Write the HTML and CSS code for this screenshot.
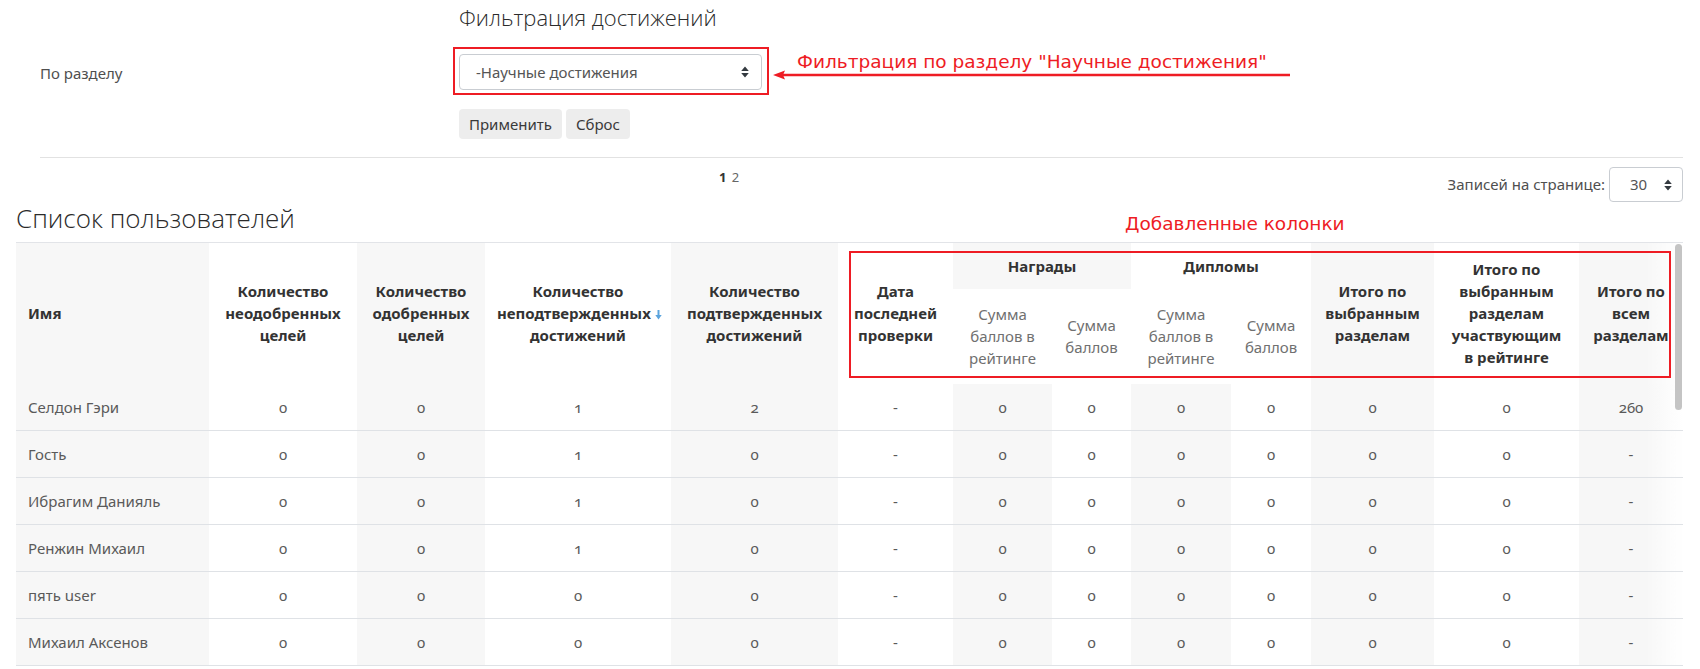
FILE: index.html
```html
<!DOCTYPE html>
<html lang="ru">
<head>
<meta charset="utf-8">
<title>Фильтрация достижений</title>
<link rel="stylesheet" href="styles.css">
</head>
<body>
<div class="page">
  <section class="filter">
    <div class="frow title-row">
      <div></div>
      <h3 class="ftitle">Фильтрация достижений</h3>
    </div>
    <div class="frow field-row">
      <label class="flabel">По разделу</label>
      <div class="fcontrol">
        <div class="annot-box">
          <div class="select wide">
            <span>-Научные достижения</span>
            <svg class="caret" width="8" height="12" viewBox="0 0 8 12"><path d="M4 0.5 L7.8 5 H0.2 Z M0.2 7 H7.8 L4 11.5 Z" fill="#343a40"/></svg>
          </div>
        </div>
        <div class="annot-note">
          <div class="annot-text">Фильтрация по разделу "Научные достижения"</div>
          <svg class="annot-arrow" width="517" height="10" viewBox="0 0 517 10"><path d="M10 5 H517" stroke="#ee1c24" stroke-width="2.4"/><path d="M0 5 L12 0.5 L10 5 L12 9.5 Z" fill="#ee1c24"/></svg>
        </div>
      </div>
    </div>
    <div class="frow btn-row">
      <div></div>
      <div class="btns">
        <button class="btn">Применить</button>
        <button class="btn">Сброс</button>
      </div>
    </div>
    <hr class="sep">
  </section>

  <div class="pagebar">
    <div class="pages"><b>1</b> <span class="plink">2</span></div>
    <div class="perpage">
      <span>Записей на странице:</span>
      <div class="select small">
        <span>30</span>
        <svg class="caret" width="8" height="12" viewBox="0 0 8 12"><path d="M4 0.5 L7.8 5 H0.2 Z M0.2 7 H7.8 L4 11.5 Z" fill="#343a40"/></svg>
      </div>
    </div>
  </div>

  <div class="list-head">
    <h2 class="ltitle">Список пользователей</h2>
    <span class="annot-text2">Добавленные колонки</span>
  </div>

  <div class="table-wrap">
    <table class="users">
      <colgroup>
        <col style="width:193px"><col style="width:148px"><col style="width:128px"><col style="width:186px"><col style="width:167px"><col style="width:115px"><col style="width:99px"><col style="width:79px"><col style="width:100px"><col style="width:80px"><col style="width:123px"><col style="width:145px"><col style="width:104px">
      </colgroup>
      <thead>
        <tr class="h1">
          <th rowspan="2" class="name">Имя</th>
          <th rowspan="2">Количество неодобренных целей</th>
          <th rowspan="2">Количество одобренных целей</th>
          <th rowspan="2">Количество <span class="nowrap">неподтвержденных<svg class="sort" width="7" height="10" viewBox="0 0 7 10"><path d="M3.5 0 V6" stroke="#5ba4dd" stroke-width="2"/><path d="M0.3 5 H6.7 L3.5 9.5 Z" fill="#5ba4dd"/></svg></span> достижений</th>
          <th rowspan="2">Количество подтвержденных достижений</th>
          <th rowspan="2">Дата последней проверки</th>
          <th colspan="2">Награды</th>
          <th colspan="2">Дипломы</th>
          <th rowspan="2">Итого по выбранным разделам</th>
          <th rowspan="2">Итого по выбранным разделам участвующим в рейтинге</th>
          <th rowspan="2" class="last">Итого по всем разделам</th>
        </tr>
        <tr class="h2">
          <th class="sub">Сумма баллов в рейтинге</th>
          <th class="sub">Сумма баллов</th>
          <th class="sub">Сумма баллов в рейтинге</th>
          <th class="sub">Сумма баллов</th>
        </tr>
      </thead>
      <tbody>
        <tr><td class="name">Селдон Гэри</td><td>0</td><td>0</td><td>1</td><td>2</td><td>-</td><td>0</td><td>0</td><td>0</td><td>0</td><td>0</td><td>0</td><td class="last">260</td></tr>
        <tr><td class="name">Гость</td><td>0</td><td>0</td><td>1</td><td>0</td><td>-</td><td>0</td><td>0</td><td>0</td><td>0</td><td>0</td><td>0</td><td class="last">-</td></tr>
        <tr><td class="name">Ибрагим Данияль</td><td>0</td><td>0</td><td>1</td><td>0</td><td>-</td><td>0</td><td>0</td><td>0</td><td>0</td><td>0</td><td>0</td><td class="last">-</td></tr>
        <tr><td class="name">Ренжин Михаил</td><td>0</td><td>0</td><td>1</td><td>0</td><td>-</td><td>0</td><td>0</td><td>0</td><td>0</td><td>0</td><td>0</td><td class="last">-</td></tr>
        <tr><td class="name">пять user</td><td>0</td><td>0</td><td>0</td><td>0</td><td>-</td><td>0</td><td>0</td><td>0</td><td>0</td><td>0</td><td>0</td><td class="last">-</td></tr>
        <tr><td class="name">Михаил Аксенов</td><td>0</td><td>0</td><td>0</td><td>0</td><td>-</td><td>0</td><td>0</td><td>0</td><td>0</td><td>0</td><td>0</td><td class="last">-</td></tr>
      </tbody>
    </table>
    <div class="annot-table"></div>
    <div class="scroll-thumb"></div>
  </div>
</div>
</body>
</html>
```
FILE: styles.css
```css
* { box-sizing: border-box; }

body {
  margin: 0;
  background: #fff;
  color: #373a3c;
  font-family: "Noto Sans", "Open Sans", sans-serif;
  font-size: 15px;
  line-height: 1.5;
}

.page {
  padding: 0 17px 0 16px;
}

/* ---------- filter form ---------- */
.filter {
  padding-left: 24px;
}

.frow {
  display: grid;
  grid-template-columns: 419px 1fr;
  align-items: center;
}

.ftitle {
  margin: 0;
  padding-top: 2px;
  font-family: "Open Sans", "Noto Sans", sans-serif;
  font-size: 22px;
  line-height: 30px;
  font-weight: 300;
  color: #2b2b2b;
}

.field-row {
  margin-top: 15px;
}

.flabel {
  padding-top: 5px;
  color: #4f4f4f;
}

.fcontrol {
  display: flex;
  align-items: flex-start;
}

.annot-box {
  width: 316px;
  margin-left: -6px;
  padding: 5px 5px 3px 4px;
  border: 2px solid #ee1c24;
}

.select {
  display: flex;
  align-items: center;
  justify-content: space-between;
  height: 36px;
  border: 1px solid #c9cdd2;
  border-radius: 4px;
  background: #fff;
  color: #555;
}

.select.wide {
  padding: 0 12px 0 16px;
}

.annot-note {
  margin-left: 4px;
  margin-top: 4px;
  width: 517px;
}

.annot-text {
  padding-left: 24px;
  font-family: "DejaVu Sans", sans-serif;
  font-size: 18.5px;
  line-height: 22px;
  color: #ee1c24;
  white-space: nowrap;
}

.annot-arrow {
  display: block;
  margin-top: -3px;
}

.btn-row {
  margin-top: 14px;
}

.btns {
  display: flex;
  gap: 4px;
}

.btn {
  height: 30px;
  padding: 0 10px;
  border: 0;
  border-radius: 4px;
  background: #ededed;
  color: #3a3a3a;
  font-family: inherit;
  font-size: 15px;
}

.sep {
  margin: 18px 0 0;
  border: 0;
  border-top: 1px solid #e2e2e2;
  height: 0;
}

/* ---------- paging ---------- */
.pagebar {
  display: flex;
  align-items: flex-start;
  height: 44px;
}

.pages {
  margin-left: 703px;
  padding-top: 10px;
  font-size: 13px;
  line-height: 18px;
  color: #333;
}

.pages b {
  margin-right: 2px;
}

.plink {
  color: #666;
}

.perpage {
  margin-left: auto;
  margin-top: 9px;
  display: flex;
  align-items: center;
  gap: 4px;
  color: #4f4f4f;
}

.select.small {
  width: 74px;
  height: 35px;
  padding: 0 10px 0 20px;
}

/* ---------- list header ---------- */
.list-head {
  display: grid;
  grid-template-columns: 1109px 1fr;
  height: 40px;
}

.ltitle {
  margin: 0;
  font-family: "Open Sans", "Noto Sans", sans-serif;
  font-size: 26px;
  line-height: 32px;
  font-weight: 300;
  color: #2b2b2b;
}

.annot-text2 {
  padding-top: 11px;
  font-family: "DejaVu Sans", sans-serif;
  font-size: 18.5px;
  line-height: 22px;
  color: #ee1c24;
  white-space: nowrap;
}

/* ---------- table ---------- */
.table-wrap {
  position: relative;
  width: 1667px;
}

.users {
  width: 1667px;
  table-layout: fixed;
  border-collapse: collapse;
  border-top: 1px solid #e2e4e8;
}

.users th,
.users td {
  padding: 0 12px;
  text-align: center;
  vertical-align: middle;
}

.users th {
  font-weight: 700;
  color: #333;
  line-height: 22px;
}

.users th.last,
.users td.last {
  padding: 0 6px;
}

.users th.name,
.users td.name {
  text-align: left;
}

.nowrap {
  white-space: nowrap;
}

.users tr.h1 { height: 46px; }
.users tr.h2 { height: 95px; }

.users tr.h1 th:nth-child(odd) {
  background: #f7f7f7;
}

.users th.sub {
  font-weight: 400;
  color: #707070;
}

.users td {
  height: 47px;
  border-bottom: 1px solid #dfe2e6;
  color: #5a5a5a;
  font-variant-numeric: oldstyle-nums;
}

.users td:nth-child(odd) {
  background: #f7f7f7;
}

.users tbody td.last {
  background: linear-gradient(to right, #f7f7f7 65%, #fff 100%);
}

.users tr.h1 th.last {
  background: linear-gradient(to right, #f7f7f7 65%, #fff 100%);
}

.sort {
  margin-left: 4px;
  vertical-align: -1px;
}

/* annotation over the added columns */
.annot-table {
  position: absolute;
  left: 833px;
  top: 9px;
  width: 822px;
  height: 127px;
  border: 2px solid #ee1c24;
  pointer-events: none;
}

.scroll-thumb {
  position: absolute;
  left: 1659px;
  top: 2px;
  width: 7px;
  height: 166px;
  border-radius: 4px;
  background: #c4c4c4;
}
```
